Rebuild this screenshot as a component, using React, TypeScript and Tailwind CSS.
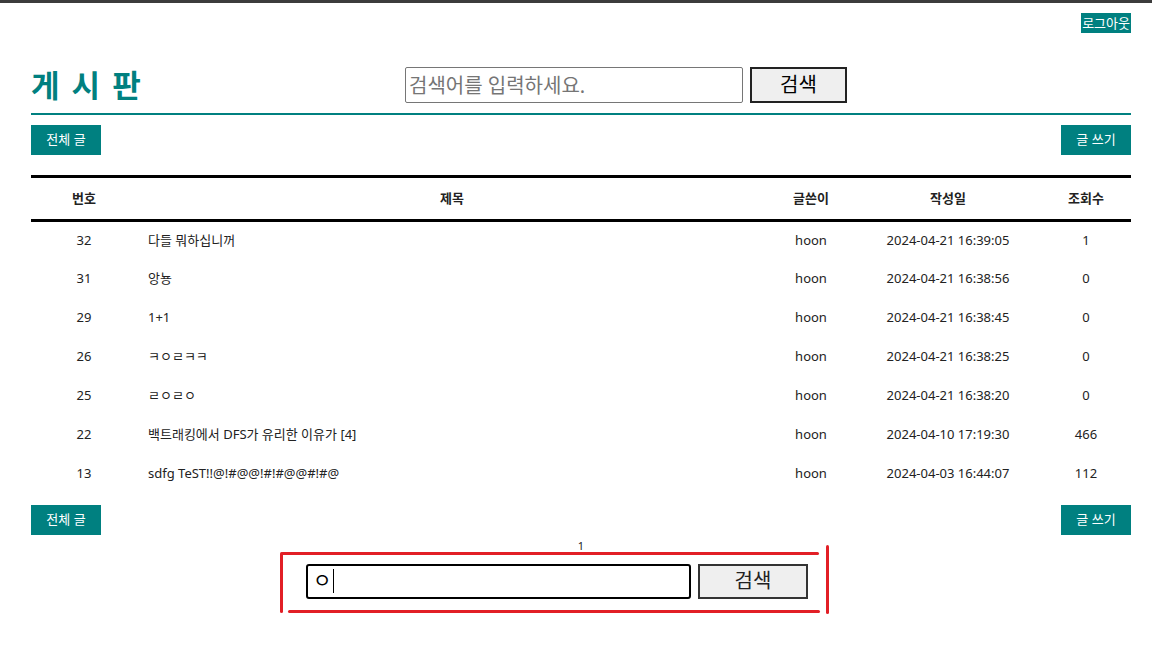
import { FC } from "react";

interface IPost {
	id: number;
	title: string;
	comments?: number;
	writer: string;
	date: string;
	views: number;
}

const posts: IPost[] = [
	{ id: 32, title: "다들 뭐하십니꺼", writer: "hoon", date: "2024-04-21 16:39:05", views: 1 },
	{ id: 31, title: "앙뇽", writer: "hoon", date: "2024-04-21 16:38:56", views: 0 },
	{ id: 29, title: "1+1", writer: "hoon", date: "2024-04-21 16:38:45", views: 0 },
	{ id: 26, title: "ㅋㅇㄹㅋㅋ", writer: "hoon", date: "2024-04-21 16:38:25", views: 0 },
	{ id: 25, title: "ㄹㅇㄹㅇ", writer: "hoon", date: "2024-04-21 16:38:20", views: 0 },
	{ id: 22, title: "백트래킹에서 DFS가 유리한 이유가", comments: 4, writer: "hoon", date: "2024-04-10 17:19:30", views: 466 },
	{ id: 13, title: "sdfg TeST!!@!#@@!#!#@@#!#@", writer: "hoon", date: "2024-04-03 16:44:07", views: 112 },
];

const font = "font-['Noto_Sans','Noto_Sans_CJK_KR',sans-serif]";

const BoardButtons: FC = () => (
	<div className="flex justify-between">
		<button className="w-[70px] h-[30px] bg-[#008080] text-white text-[13px]">전체 글</button>
		<button className="w-[70px] h-[30px] bg-[#008080] text-white text-[13px]">글 쓰기</button>
	</div>
);

const App: FC = () => {
	return (
		<div className={`min-h-[667px] bg-white border-t-[3px] border-[#3c3c3c] ${font}`}>
			<div className="w-[1100px] ml-[31px]">
				<div className="flex justify-end mt-[10px]">
					<button className="h-[20px] px-[1px] bg-[#008080] text-white text-[13px] leading-[20px]">
						로그아웃
					</button>
				</div>

				<header className="flex items-center pt-[34px] pb-[10px] border-b-2 border-[#008080]">
					<h1 className="w-[374px] text-[31px] font-bold text-[#008080] tracking-[2px] leading-[36px]">
						게 시 판
					</h1>
					<input
						className="w-[338px] h-[36px] px-[3px] border border-[#767676] rounded-[2px] text-[20px] placeholder:text-[#757575]"
						placeholder="검색어를 입력하세요."
					/>
					<button className="ml-[7px] w-[97px] h-[36px] border-2 border-[#222] bg-[#efefef] text-[20px]">
						검색
					</button>
				</header>

				<div className="mt-[10px]">
					<BoardButtons />
				</div>

				<table className="mt-[20px] w-full table-fixed border-collapse text-[13px] text-[#222]">
					<thead>
						<tr className="h-[44px] border-t-[3px] border-b-[3px] border-black">
							<th className="w-[106px] font-bold">번호</th>
							<th className="w-[630px] font-bold">제목</th>
							<th className="w-[88px] font-bold">글쓴이</th>
							<th className="w-[186px] font-bold">작성일</th>
							<th className="font-bold">조회수</th>
						</tr>
					</thead>
					<tbody>
						{posts.map((p) => (
							<tr key={p.id} className="h-[39px]">
								<td className="text-center">{p.id}</td>
								<td className="pl-[11px]">
									{p.title}
									{p.comments !== undefined && <span> [{p.comments}]</span>}
								</td>
								<td className="text-center">{p.writer}</td>
								<td className="text-center">{p.date}</td>
								<td className="text-center">{p.views}</td>
							</tr>
						))}
					</tbody>
				</table>

				<div className="mt-[11px]">
					<BoardButtons />
				</div>

				<div className="text-center text-[11px] leading-[16px] text-[#222] mt-[3px]">1</div>

				<div className="relative h-[70px]">
					<div className="flex items-center pl-[275px] pt-[10px]">
						<div className="flex items-center w-[385px] h-[35px] px-[5px] border-2 border-black rounded-[3px] text-[20px]">
							<span>ㅇ</span>
							<span className="ml-[2px] w-px h-[24px] bg-black" />
						</div>
						<button className="ml-[7px] w-[110px] h-[35px] border-2 border-[#333] bg-[#efefef] text-[20px] text-[#222]">
							검색
						</button>
					</div>
					<span className="absolute left-[250px] top-[-2px] w-[538px] h-[3px] bg-[#e21f26] rounded-full" />
					<span className="absolute left-[249px] top-[-2px] w-[3px] h-[61px] bg-[#e21f26] rounded-full" />
					<span className="absolute left-[257px] top-[56px] w-[532px] h-[3px] bg-[#e21f26] rounded-full" />
					<span className="absolute left-[795px] top-[-9px] w-[3px] h-[69px] bg-[#e21f26] rounded-full" />
				</div>
			</div>
		</div>
	);
};

export default App;
